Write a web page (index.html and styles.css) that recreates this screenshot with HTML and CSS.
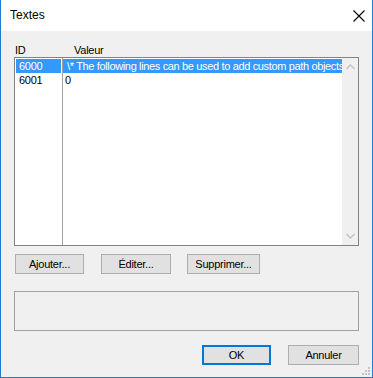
FILE: index.html
```html
<!DOCTYPE html>
<html lang="fr">
<head>
  <meta charset="UTF-8">
  <title>Textes</title>
  <link rel="stylesheet" href="styles.css">
</head>
<body>
  <div class="window">
    <div class="titlebar">
      <span class="title">Textes</span>
      <svg class="close" width="12" height="12" viewBox="0 0 12 12">
        <path d="M0.5 0.5 L11.5 11.5 M11.5 0.5 L0.5 11.5" stroke="#000" stroke-width="1.1" fill="none"/>
      </svg>
    </div>
    <div class="content">
      <div class="headers">
        <span class="col-id">ID</span>
        <span class="col-val">Valeur</span>
      </div>
      <div class="list">
        <div class="rows">
          <div class="row selected">
            <span class="cell-id">6000</span>
            <span class="cell-val">\* The following lines can be used to add custom path objects</span>
          </div>
          <div class="row">
            <span class="cell-id">6001</span>
            <span class="cell-val">0</span>
          </div>
          <div class="divider"></div>
        </div>
        <div class="scrollbar">
          <svg width="9" height="6" viewBox="0 0 9 6"><path d="M0.5 5 L4.5 1 L8.5 5" stroke="#c2c2c2" stroke-width="1.3" fill="none"/></svg>
          <svg width="9" height="6" viewBox="0 0 9 6"><path d="M0.5 1 L4.5 5 L8.5 1" stroke="#c2c2c2" stroke-width="1.3" fill="none"/></svg>
        </div>
      </div>
      <div class="actions">
        <button class="btn btn-add">Ajouter...</button>
        <button class="btn btn-edit">Éditer...</button>
        <button class="btn btn-del">Supprimer...</button>
      </div>
      <div class="panel"></div>
      <div class="footer">
        <button class="btn btn-ok">OK</button>
        <button class="btn btn-cancel">Annuler</button>
      </div>
    </div>
    <svg class="grip" width="8" height="8" viewBox="0 0 8 8">
      <rect x="6" y="0" width="2" height="2" fill="#c4c4c4"/>
      <rect x="3" y="3" width="2" height="2" fill="#c4c4c4"/>
      <rect x="6" y="3" width="2" height="2" fill="#c4c4c4"/>
      <rect x="0" y="6" width="2" height="2" fill="#c4c4c4"/>
      <rect x="3" y="6" width="2" height="2" fill="#c4c4c4"/>
      <rect x="6" y="6" width="2" height="2" fill="#c4c4c4"/>
    </svg>
  </div>
</body>
</html>
```

FILE: styles.css
```css
html, body {
  margin: 0;
  padding: 0;
  background: #fff;
}
body {
  font-family: "Liberation Sans", Arial, sans-serif;
  font-size: 11px;
  letter-spacing: -0.25px;
  color: #000;
}
.window {
  position: relative;
  width: 373px;
  height: 378px;
  box-sizing: border-box;
  border: 1px solid #1b7dd3;
  border-top: none;
  background: #f0f0f0;
  display: flex;
  flex-direction: column;
}
.titlebar {
  height: 31px;
  background: #fff;
  display: flex;
  align-items: center;
  justify-content: space-between;
  padding: 0 7px 0 9px;
}
.title {
  font-size: 12px;
  letter-spacing: 0;
  margin-top: -1px;
}
.content {
  padding: 0 13px;
  display: flex;
  flex-direction: column;
}
.headers {
  display: flex;
  height: 25px;
  align-items: flex-end;
  padding-bottom: 1px;
}
.col-id {
  width: 59px;
  padding-left: 1px;
}
.list {
  height: 187px;
  border: 1px solid #828282;
  background: #fff;
  display: flex;
}
.rows {
  position: relative;
  flex: 1;
  min-width: 0;
  padding: 1px 0 0 1px;
}
.row {
  display: flex;
  height: 14px;
  line-height: 14px;
  white-space: nowrap;
}
.cell-id {
  width: 42px;
  padding-left: 3px;
  flex: none;
}
.cell-val {
  padding-left: 4px;
  overflow: hidden;
  flex: 1;
  min-width: 0;
  letter-spacing: -0.35px;
}
.row.selected .cell-id,
.row.selected .cell-val {
  background: #3399ff;
  color: #fff;
}
.row.selected .cell-id {
  margin-right: 2px;
}
.divider {
  position: absolute;
  left: 47px;
  top: 0;
  bottom: 0;
  width: 1px;
  background: #a0a0a0;
}
.scrollbar {
  width: 16px;
  flex: none;
  background: #f0f0f0;
  display: flex;
  flex-direction: column;
  justify-content: space-between;
  align-items: center;
  padding: 6px 0 6px;
  box-sizing: border-box;
}
.actions {
  display: flex;
  margin-top: 8px;
  padding-left: 1px;
}
.btn {
  font-family: "Liberation Sans", Arial, sans-serif;
  font-size: 11px;
  letter-spacing: -0.25px;
  color: #000;
  background: #e1e1e1;
  border: 1px solid #adadad;
  height: 20px;
  padding: 0;
  box-sizing: border-box;
}
.btn-add { width: 69px; }
.btn-edit { width: 70px; margin-left: 17px; }
.btn-del { width: 73px; margin-left: 16px; }
.panel {
  margin-top: 17px;
  height: 40px;
  border: 1px solid #a0a0a0;
  box-sizing: border-box;
}
.footer {
  display: flex;
  justify-content: flex-end;
  margin-top: 14px;
}
.btn-ok {
  width: 69px;
  border: 2px solid #0078d7;
}
.btn-cancel {
  width: 71px;
  margin-left: 17px;
}
.grip {
  position: absolute;
  right: 2px;
  bottom: 2px;
}
```
